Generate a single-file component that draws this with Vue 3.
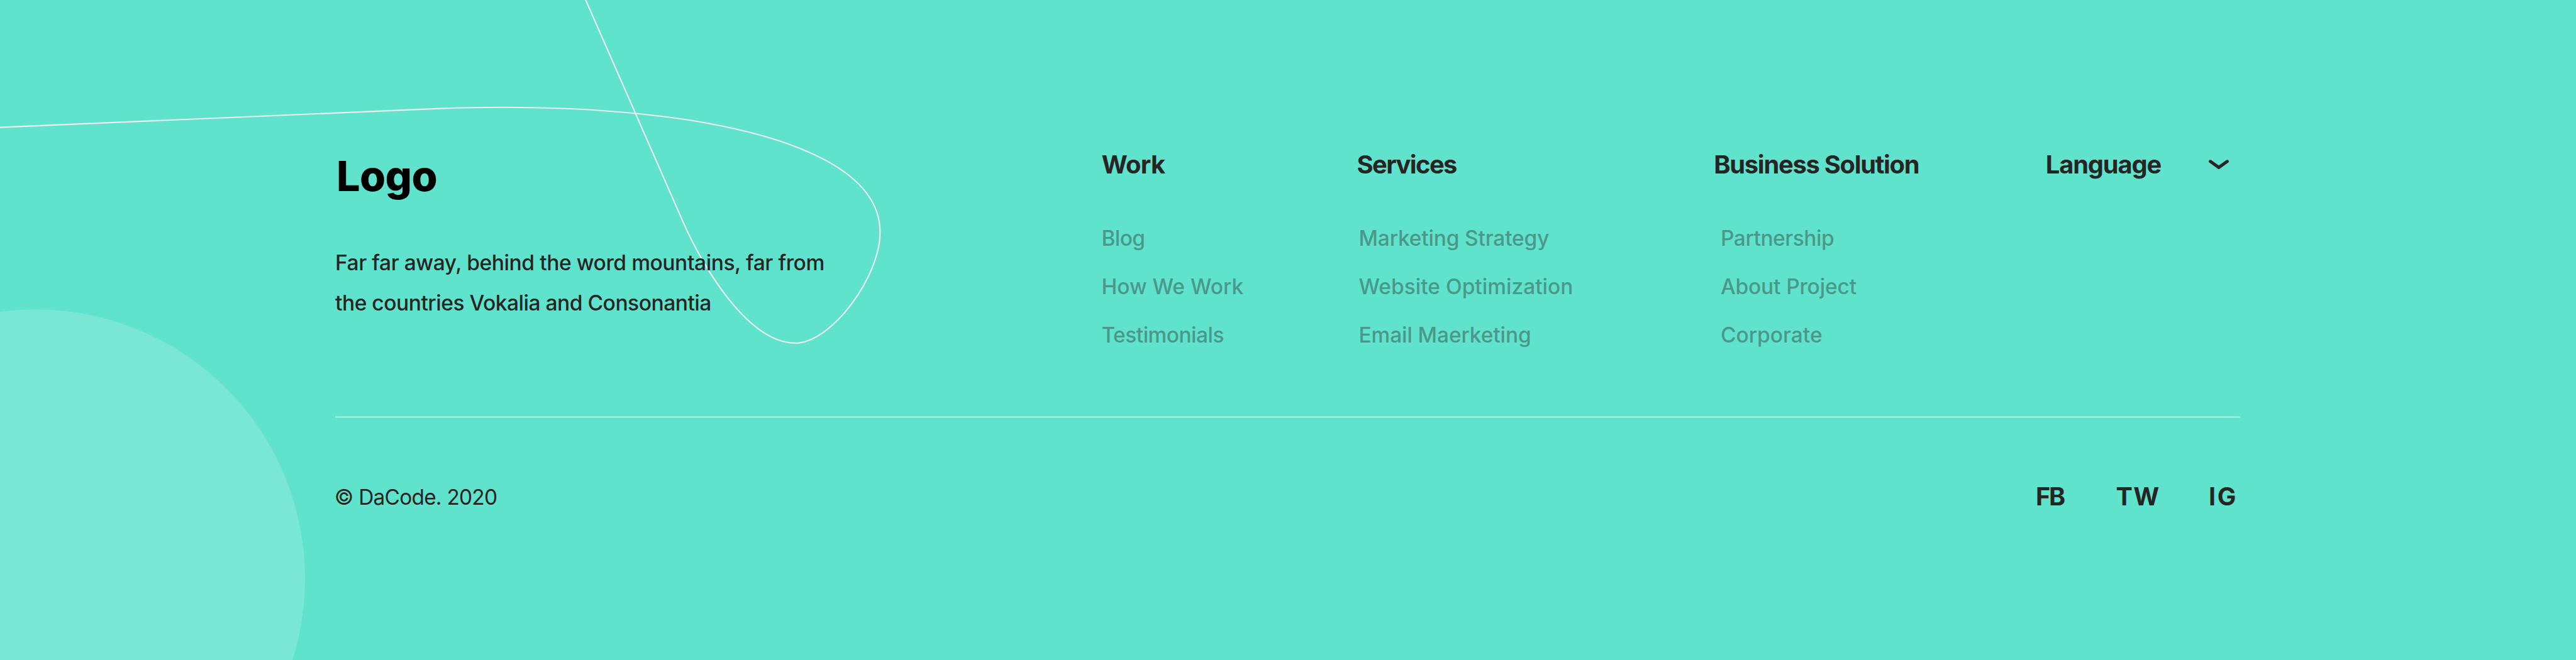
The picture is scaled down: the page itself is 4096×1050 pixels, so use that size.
<script setup>
const columns = [
  {
    key: 'work',
    title: 'Work',
    tracking: -0.65,
    links: [
      { label: 'Blog', tracking: -0.53 },
      { label: 'How We Work', tracking: 0.02 },
      { label: 'Testimonials', tracking: -0.47 },
    ],
  },
  {
    key: 'services',
    title: 'Services',
    tracking: -1.54,
    links: [
      { label: 'Marketing Strategy', tracking: -0.13 },
      { label: 'Website Optimization', tracking: 0.06 },
      { label: 'Email Maerketing', tracking: -0.06 },
    ],
  },
  {
    key: 'business',
    title: 'Business Solution',
    tracking: -1.24,
    links: [
      { label: 'Partnership', tracking: -0.41 },
      { label: 'About Project', tracking: -0.11 },
      { label: 'Corporate', tracking: 0.05 },
    ],
  },
]

const socials = [
  { label: 'FB', tracking: -2.2 },
  { label: 'TW', tracking: 1.55 },
  { label: 'IG', tracking: 2.71 },
]
</script>

<template>
  <footer class="footer">
    <svg class="decor" viewBox="0 0 5760 1476" aria-hidden="true">
      <circle cx="80" cy="1294" r="602" fill="#7ae7d4" />
      <path
        d="M-10 285 L960 243.5 C1154 235.2 1347 239 1541 268.4 C1788 308 1967.9 386.4 1967.9 519.4 C1967.9 619.4 1858.6 767.3 1778.6 767.3 C1673 767.3 1571.5 597 1527.7 497 L1305.4 -10"
        fill="none"
        stroke="#eeeeee"
        stroke-width="3"
      />
    </svg>

    <div class="top">
      <section class="brand">
        <h1 class="logo">Logo</h1>
        <p class="about">
          <span class="line first">Far far away, behind the word mountains, far from</span>
          <span class="line second">the countries Vokalia and Consonantia</span>
        </p>
      </section>

      <nav v-for="col in columns" :key="col.key" :class="['column', col.key]">
        <h2 class="heading" :style="{ letterSpacing: col.tracking + 'px' }">{{ col.title }}</h2>
        <ul class="links">
          <li v-for="link in col.links" :key="link.label" :style="{ letterSpacing: link.tracking + 'px' }">
            {{ link.label }}
          </li>
        </ul>
      </nav>

      <div class="language">
        <h2 class="heading">Language</h2>
        <svg class="chevron" width="36" height="20" viewBox="0 0 36 20" aria-hidden="true">
          <path
            d="M4.6 4.8 L18 14.4 L31.4 4.8"
            fill="none"
            stroke="#272424"
            stroke-width="5"
            stroke-linecap="round"
            stroke-linejoin="round"
          />
        </svg>
      </div>
    </div>

    <div class="divider"></div>

    <div class="bottom">
      <p class="copyright">© DaCode. 2020</p>
      <div class="socials">
        <span v-for="s in socials" :key="s.label" class="social" :style="{ letterSpacing: s.tracking + 'px' }">{{ s.label }}</span>
      </div>
    </div>
  </footer>
</template>

<style>
html,
body {
  margin: 0;
  background: #60e3cc;
}
</style>

<style scoped>
.footer {
  position: relative;
  box-sizing: border-box;
  width: 4096px;
  height: 1050px;
  padding: 238px 533.6px 0 533px;
  overflow: hidden;
  background: #60e3cc;
  color: #272424;
  font-family: Inter, 'Liberation Sans', sans-serif;
}

.decor {
  position: absolute;
  inset: 0;
  width: 4096px;
  height: 1050px;
}

.top,
.divider,
.bottom {
  position: relative;
}

.top {
  display: grid;
  grid-template-columns: 1218.4px 406.1px 567.7px 527.7px 1fr;
  height: 424px;
}

.logo {
  margin: 2px 0 0 2px;
  color: #000;
  font-size: 66.5px;
  font-weight: 800;
  line-height: 80px;
  letter-spacing: -0.59px;
}

.about {
  margin: 66px 0 0;
  font-size: 33.6px;
  font-weight: 500;
  line-height: 64px;
}

.line {
  display: block;
  white-space: nowrap;
}

.first {
  letter-spacing: -0.44px;
}

.second {
  letter-spacing: -0.5px;
}

.heading {
  margin: 0;
  font-size: 39.8px;
  font-weight: 700;
  line-height: 48px;
  white-space: nowrap;
}

.links {
  margin: 55.3px 0 0;
  padding: 0;
  list-style: none;
  color: #4a9889;
  font-size: 33.4px;
  font-weight: 500;
  line-height: 76.8px;
  white-space: nowrap;
}

.services .links {
  padding-left: 3px;
}

.business .links {
  padding-left: 10.8px;
}

.language {
  display: flex;
  align-items: flex-start;
  justify-content: space-between;
  padding-right: 16px;
}

.language .heading {
  letter-spacing: -1.14px;
}

.chevron {
  flex: none;
  margin-top: 13.8px;
}

.divider {
  height: 3px;
  width: 3029.4px;
  background: linear-gradient(
    rgba(255, 255, 255, 0.25) 1px,
    rgba(255, 255, 255, 0.6) 1px 2px,
    rgba(255, 255, 255, 0.25) 2px
  );
}

.bottom {
  display: flex;
  justify-content: space-between;
  align-items: flex-start;
  padding-top: 100.8px;
}

.copyright {
  margin: 5.5px 0 0 -1.3px;
  font-size: 33.4px;
  font-weight: 400;
  line-height: 40px;
  letter-spacing: -0.74px;
}

.socials {
  display: grid;
  grid-template-columns: 127.5px 147.5px 50.5px;
  font-size: 39.5px;
  font-weight: 700;
  line-height: 48px;
}
</style>
